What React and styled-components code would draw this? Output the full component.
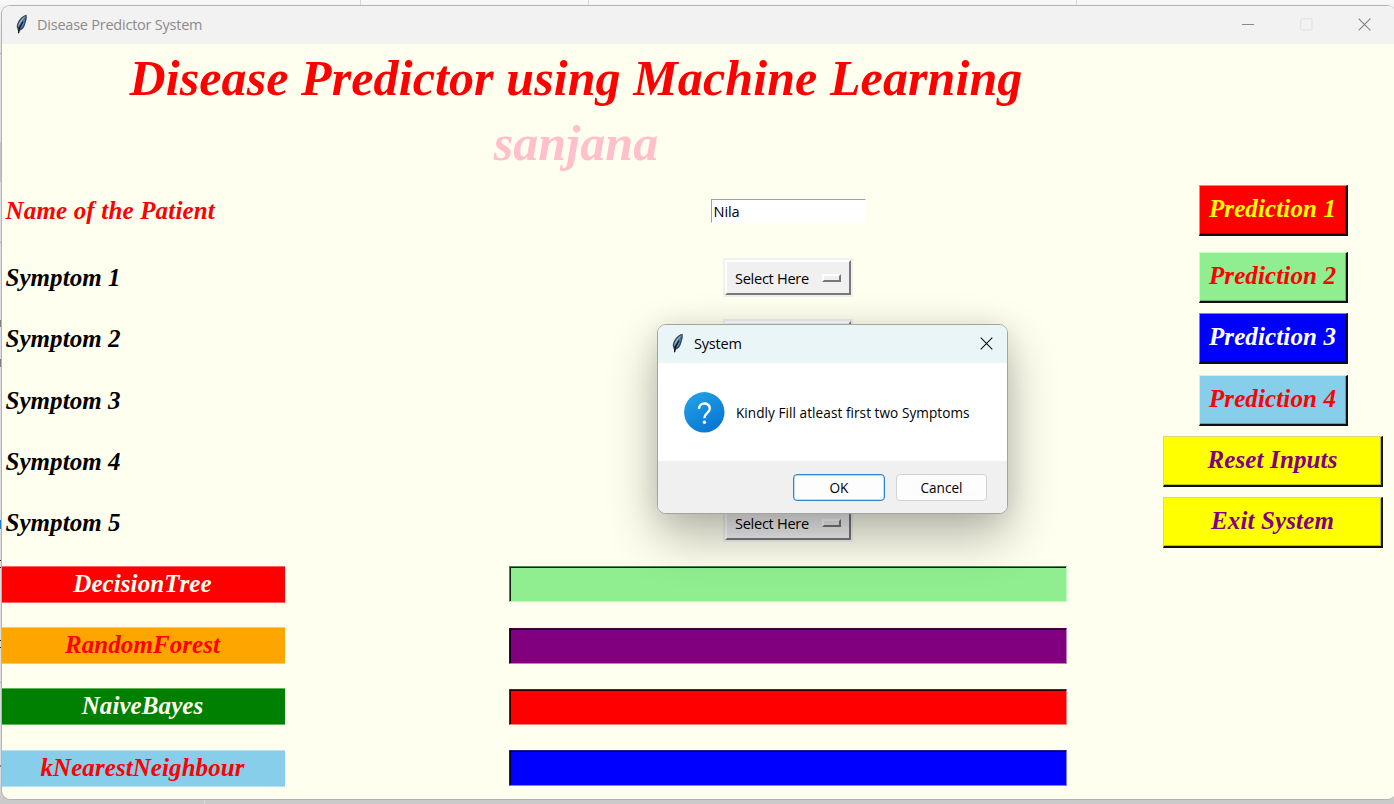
import React from "react";
import styled, { createGlobalStyle } from "styled-components";

const Global = createGlobalStyle`
  * { box-sizing: border-box; }
  html, body { margin: 0; padding: 0; overflow: hidden; }
`;

const ui = `"Open Sans", "Noto Sans", sans-serif`;
const serif = `"Liberation Serif", "Times New Roman", serif`;

const Desktop = styled.div`
  position: relative;
  width: 1394px;
  height: 804px;
  overflow: hidden;
  padding: 5px 0 0 1px;
  background: linear-gradient(#f8f8f8 0, #f4f4f4 5px, #dedfe3 60px, #dcdde2 780px, #cacaca 800px);
`;

const DesktopEdge = styled.svg`
  position: absolute;
  left: 0;
  top: 0;
`;

const Window = styled.div`
  position: relative;
  width: 1395px;
  height: 795px;
  border: 1px solid #b3b3b3;
  border-right: 0;
  border-radius: 9px;
  background: #ffffef;
  overflow: hidden;
`;

const TitleBar = styled.header`
  display: flex;
  align-items: center;
  height: 38px;
  padding-left: 12px;
  background: #f2f2f2;
  color: #8b8b8b;
  font: 14.5px/20px ${ui};
`;

const TitleText = styled.span`
  margin-left: 8px;
  letter-spacing: ${(p) => p.$spacing};
  white-space: nowrap;
`;

const WindowControls = styled.div`
  display: flex;
  gap: 45px;
  margin-left: auto;
  padding: 0 25px 1px 0;
`;

const Form = styled.main`
  display: grid;
  grid-template-columns: 424px 724px 246px;
  grid-template-rows: 66px 64px 73px repeat(9, 61.33px);
  align-items: center;
  color: #000;
  font: italic bold 25px/29px ${serif};
  font-kerning: none;
  white-space: nowrap;
`;

const Heading = styled.h1`
  grid-column: 1 / 3;
  margin: 0;
  padding-top: ${(p) => p.$drop}px;
  text-align: center;
  font: italic bold 50px/58px ${serif};
  font-kerning: none;
  letter-spacing: 0.1px;
  color: ${(p) => p.$color};
`;

const Blank = styled.div`
  height: 1px;
`;

const Label = styled.label`
  padding-left: 3.5px;
  letter-spacing: ${(p) => (p.$color ? 0.17 : 0.05)}px;
  color: ${(p) => p.$color || "#000"};
`;

const Algorithm = styled.div`
  width: 283px;
  height: 37px;
  padding: 0 2px 2px 0;
  line-height: 35px;
  text-align: center;
  letter-spacing: 0.08px;
  background: ${(p) => p.$bg};
  color: ${(p) => p.$color};
  box-shadow: inset 0 1px rgba(255, 255, 239, 0.4), inset 0 -1px rgba(255, 255, 239, 0.4);
`;

const PatientInput = styled.input`
  justify-self: center;
  width: 155px;
  height: 24px;
  padding: 0 2px;
  border: 1px solid #fff;
  border-top: 1.5px solid #a0a0a0;
  border-left-color: #a0a0a0;
  border-radius: 0;
  outline: 0;
  background: #fff;
  color: #000;
  font: 14.6px/20px ${ui};
  letter-spacing: -0.1px;
`;

const Option = styled.button`
  justify-self: center;
  display: flex;
  align-items: center;
  justify-content: space-between;
  width: 126px;
  height: 35px;
  padding: 0 8px 0 8px;
  border: 2px solid;
  border-color: #fff #787878 #787878 #fff;
  border-radius: 0;
  background: #f0f0f0;
  outline: 2px solid #f0f0f0;
  color: #000;
  font: 14.6px/20px ${ui};
  letter-spacing: -0.3px;
`;

const Indicator = styled.span`
  width: 19px;
  height: 8px;
  border: 2px solid;
  border-color: #fff #787878 #787878 #fff;
  background: #f0f0f0;
`;

const Result = styled.div`
  justify-self: center;
  width: 558px;
  height: 36px;
  background: ${(p) => p.$bg};
  border: 1px solid;
  border-color: ${(p) => `${p.$dark} ${p.$light} ${p.$light} ${p.$dark}`};
  box-shadow: inset 1px 1px ${(p) => p.$inner};
`;

const Action = styled.button`
  justify-self: center;
  width: ${(p) => (p.$wide ? 220 : 149)}px;
  height: 51px;
  padding: 0 0 3px 0;
  border: 1px solid;
  border-width: 1px 2px 2px 1px;
  border-color: ${(p) => p.$light} #101010 #101010 ${(p) => p.$light};
  box-shadow: inset -1px -1px rgba(0, 0, 0, 0.25);
  border-radius: 0;
  background: ${(p) => p.$bg};
  color: ${(p) => p.$color};
  font: italic bold 25px/29px ${serif};
  font-kerning: none;
  letter-spacing: 0.13px;
`;

const Dialog = styled.section`
  position: absolute;
  left: 657px;
  top: 324px;
  width: 351px;
  height: 190px;
  border: 1px solid #a2a59e;
  border-radius: 9px;
  overflow: hidden;
  background: #fff;
  box-shadow: 0 22px 50px rgba(0, 0, 0, 0.3), 0 0 24px rgba(0, 0, 0, 0.08);
  color: #000;
  white-space: nowrap;
`;

const DialogBar = styled.div`
  display: flex;
  align-items: center;
  height: 38px;
  padding: 0 14px 0 12px;
  background: #eaf5f8;
  font: 14.5px/20px ${ui};
  > span { margin-left: 9px; }
  > :last-child { margin: -1px 0 0 auto; }
`;

const Message = styled.div`
  display: flex;
  align-items: center;
  height: 98px;
  padding: 0 0 0 26px;
  gap: 11px;
  font: 13.6px/18px ${ui};
  letter-spacing: 0.05px;
  > span { padding-top: 2px; }
`;

const Footer = styled.div`
  display: flex;
  justify-content: flex-end;
  gap: 11px;
  height: 53px;
  padding: 13px 20px 0;
  background: #f0f0f0;
`;

const DialogButton = styled.button`
  width: ${(p) => (p.$primary ? 92 : 91)}px;
  height: 27px;
  padding: 1px 0 0;
  border: ${(p) => (p.$primary ? "1px solid #2a88d4" : "1px solid #d2d2d2")};
  box-shadow: ${(p) => (p.$primary ? "inset 0 0 0 0.5px #7db9e8" : "none")};
  border-radius: 4px;
  background: #fdfdfd;
  color: #000;
  font: 13.6px/18px ${ui};
`;

const Feather = () => (
  <svg width="15" height="22" viewBox="0 0 15 22">
    <path d="M12.600 .8C7.500 1.800 3.300 7 2.700 12.800l1.200 3.400.5 4.200 1-3.600c3.200-1 5.200-3.600 6-7.400.7-3 1.900-4.600 1.200-8.600z" fill="#33424f" />
    <path d="M11.900 2.100C8 3.800 4.300 8.500 3.900 13.500L9.500 5.500z" fill="#9ab0c4" />
    <path d="M11.800 2.500L6 14.800c2.700-1.200 3.800-3.500 4.300-6z" fill="#4a8ad4" />
    <path d="M10 4.500L5 12.500l.6 1.500L11 5z" fill="#3e7cc6" />
    <path d="M9 7.500L5.400 14 4.700 19" stroke="#0c1118" strokeWidth="1.200" fill="none" />
  </svg>
);

const Close = ({ color }) => (
  <svg width="13" height="13" viewBox="0 0 13 13">
    <path d="M.7.7l11.600 11.600M12.300.7L.7 12.300" stroke={color} strokeWidth="1.1" />
  </svg>
);

const Question = () => (
  <svg width="41" height="41" viewBox="0 0 41 41">
    <defs>
      <linearGradient id="q" x1="0.2" y1="0" x2="0.8" y2="1">
        <stop offset="0" stopColor="#22a2e4" />
        <stop offset="1" stopColor="#0573d3" />
      </linearGradient>
    </defs>
    <circle cx="20.300" cy="20.300" r="20.200" fill="url(#q)" />
    <path d="M15 17C15 9.800 25.800 9.800 25.800 16.500c0 4.500-5.400 4.300-5.400 9.800" stroke="#fff" strokeWidth="2.400" fill="none" />
    <circle cx="20.400" cy="30.300" r="1.700" fill="#fff" />
  </svg>
);

const predictions = [
  { text: "Prediction 2", bg: "#90ee90", color: "#ff0000", light: "#c4ffc4" },
  { text: "Prediction 3", bg: "#0000ff", color: "#ffffff", light: "#7d7dff" },
  { text: "Prediction 4", bg: "#87ceeb", color: "#ff0000", light: "#b4fbff" },
  { text: "Reset Inputs", bg: "#ffff00", color: "#800080", light: "#d9d978", wide: true },
  { text: "Exit System", bg: "#ffff00", color: "#800080", light: "#d9d978", wide: true },
];

const algorithms = [
  { name: "DecisionTree", bg: "#ff0000", color: "#fffff0", out: "#90ee90", dark: "#4f834f", light: "#c0f9bc", inner: "#132013" },
  { name: "RandomForest", bg: "#ffa500", color: "#ff0000", out: "#800080", dark: "#45003f", light: "#c080b8", inner: "#120012" },
  { name: "NaiveBayes", bg: "#008000", color: "#fffff0", out: "#ff0000", dark: "#8a1111", light: "#ff8078", inner: "#300000" },
  { name: "kNearestNeighbour", bg: "#87ceeb", color: "#ff0000", out: "#0000ff", dark: "#20208a", light: "#8080f6", inner: "#000030" },
];

export default function App() {
  return (
    <Desktop>
      <Global />
      <DesktopEdge width="1394" height="804">
        <path d="M360.500 0v5M588.500 0v5M1076.500 0v5M204.500 800v4" stroke="#d8d8d8" />
        <path d="M0 53.500h2M0 242.500h2M0 682.500h2" stroke="#aaa" />
        <path d="M0 142h2v40H0z" fill="#c4c4c6" />
        <path d="M0 320v7M0 359v8M0 560.500h2M0 567.500h2M0 640.500h2M0 647.500h2M0 766h2" stroke="#222" />
        <path d="M0 520h1v9H0z" fill="#247bc5" />
      </DesktopEdge>
      <Window>
        <TitleBar>
          <Feather />
          <TitleText $spacing="-0.23px">Disease Predictor System</TitleText>
          <WindowControls>
            <svg width="13" height="13"><path d="M0 6.500h12" stroke="#8b8b8b" /></svg>
            <svg width="13" height="13"><rect x=".7" y=".7" width="11.300" height="11.300" rx="1" fill="none" stroke="#dfdfdf" /></svg>
            <Close color="#828282" />
          </WindowControls>
        </TitleBar>
        <Form>
          <Heading $color="#ff0000" $drop={2}>Disease Predictor using Machine Learning</Heading>
          <Blank />
          <Heading $color="#ffc0cb" $drop={1}>sanjana</Heading>
          <Blank />
          <Label $color="#ff0000">Name of the Patient</Label>
          <PatientInput defaultValue="Nila" />
          <Action $bg="#ff0000" $color="#ffff00" $light="#ff7d78">Prediction 1</Action>
          {predictions.map((p, i) => (
            <React.Fragment key={p.text}>
              <Label>Symptom {i + 1}</Label>
              <Option>Select Here<Indicator /></Option>
              <Action $bg={p.bg} $color={p.color} $light={p.light} $wide={p.wide}>{p.text}</Action>
            </React.Fragment>
          ))}
          {algorithms.map((a) => (
            <React.Fragment key={a.name}>
              <Algorithm $bg={a.bg} $color={a.color}>{a.name}</Algorithm>
              <Result $bg={a.out} $dark={a.dark} $light={a.light} $inner={a.inner} />
              <Blank />
            </React.Fragment>
          ))}
        </Form>
      </Window>
      <Dialog>
        <DialogBar>
          <Feather />
          <TitleText $spacing="-0.2px">System</TitleText>
          <Close color="#111" />
        </DialogBar>
        <Message>
          <Question />
          <span>Kindly Fill atleast first two Symptoms</span>
        </Message>
        <Footer>
          <DialogButton $primary>OK</DialogButton>
          <DialogButton>Cancel</DialogButton>
        </Footer>
      </Dialog>
    </Desktop>
  );
}
